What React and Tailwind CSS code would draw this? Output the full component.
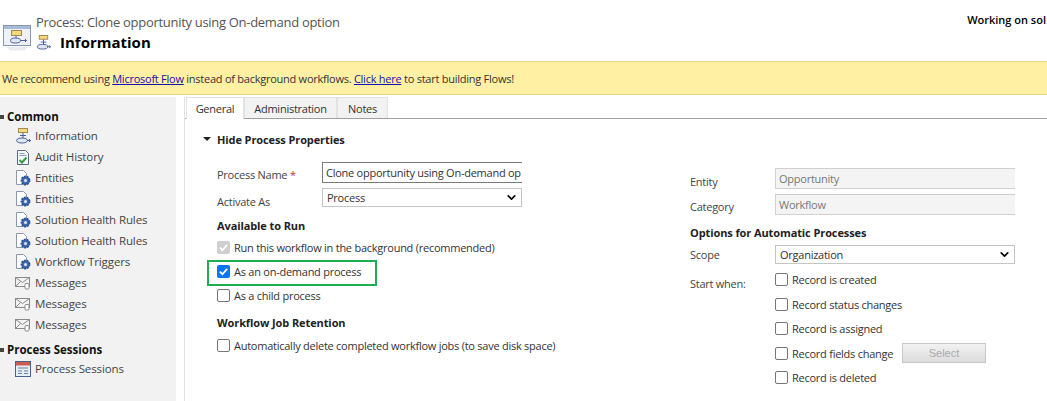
import { ChevronDown } from "lucide-react";

function FlowIcon({ className = "w-[16px] h-[16px]" }) {
  return (
    <svg viewBox="0 0 16 16" className={className}>
      <rect x="3.5" y="0.5" width="9" height="4" fill="#f8d77c" stroke="#a08a50" />
      <path d="M8 5v5M5 7.5h6" stroke="#4a5f96" />
      <ellipse cx="7" cy="12.5" rx="5.5" ry="2.5" fill="#dfe7f5" stroke="#4a5f96" />
      <path d="M12 12.5h3.5M14 11l1.5 1.5L14 14" fill="none" stroke="#4a5f96" />
    </svg>
  );
}

function AuditIcon() {
  return (
    <svg viewBox="0 0 16 16" className="w-[16px] h-[16px]">
      <path d="M2.5 1.5h8l3 3v11h-11z" fill="#f4f7fb" stroke="#5b6b85" />
      <path d="M4.5 4.5h5M4.5 6.5h7" stroke="#8fa0b8" />
      <path d="M4.5 11l2.5 2.5 4.5-5" fill="none" stroke="#2f9e3c" strokeWidth="2" />
    </svg>
  );
}

function GearDocIcon() {
  return (
    <svg viewBox="0 0 16 16" className="w-[16px] h-[16px]">
      <path d="M1.5 0.5h7l3 3v11h-10z" fill="#fff" stroke="#8b97ab" />
      <circle cx="10.5" cy="10.5" r="4" fill="#3f6cb5" stroke="#274b8c" strokeWidth="1.8" strokeDasharray="1.8 1" />
      <circle cx="10.5" cy="10.5" r="1.5" fill="#dfe8f5" />
    </svg>
  );
}

function MailIcon() {
  return (
    <svg viewBox="0 0 16 16" className="w-[16px] h-[16px]">
      <rect x="0.5" y="2.5" width="14" height="9" fill="#f3f3f3" stroke="#8a8a8a" />
      <path d="M0.5 2.5l7 5 7-5M0.5 11.5l5-5" fill="none" stroke="#8a8a8a" />
      <rect x="10" y="8.5" width="4" height="5.5" rx="1" fill="#fff" stroke="#8a8a8a" />
    </svg>
  );
}

function SessionIcon() {
  return (
    <svg viewBox="0 0 16 16" className="w-[16px] h-[16px]">
      <rect x="0.5" y="0.5" width="15" height="15" fill="#e8eef6" stroke="#46618c" />
      <rect x="1" y="1" width="14" height="3.5" fill="#c95f50" />
      <path d="M3 7h10M3 10h4M9 10h4M3 12.5h4M9 12.5h4" stroke="#6b7f9f" />
    </svg>
  );
}

function BigProcessIcon() {
  return (
    <svg viewBox="0 0 30 30" className="w-[30px] h-[30px]">
      <rect x="1.5" y="3.5" width="27" height="20" fill="#eef2f8" stroke="#8898b3" />
      <rect x="2" y="4" width="26" height="3" fill="#a9bad3" />
      <rect x="9.5" y="8.5" width="10" height="5" fill="#f8d77c" stroke="#9b8a55" />
      <path d="M14 14v3" stroke="#4a5f96" />
      <ellipse cx="13.5" cy="18.5" rx="5" ry="2.5" fill="#dfe7f5" stroke="#4a5f96" />
      <path d="M18.5 18.5h6M23 17l1.5 1.5L23 20" fill="none" stroke="#4a5f96" />
      <path d="M4 24.5h22l-3 4H8z" fill="#e9edf3" />
    </svg>
  );
}

function CheckBox({ checked, disabled }) {
  if (checked) {
    return (
      <span className={`w-[13px] h-[13px] rounded-[2px] flex items-center justify-center shrink-0 ${disabled ? "bg-[#cfcfcf]" : "bg-[#0a75f0]"}`}>
        <svg viewBox="0 0 12 12" className="w-[11px] h-[11px]">
          <path d="M2 6.2l2.8 2.8L10 3.2" fill="none" stroke="#fff" strokeWidth="2" />
        </svg>
      </span>
    );
  }
  return <span className="w-[13px] h-[13px] rounded-[2px] border border-[#767676] bg-white shrink-0" />;
}

function Check({ label, checked, disabled, className = "" }) {
  return (
    <div className={`flex items-center gap-[4px] text-[#333] ${className}`}>
      <CheckBox checked={checked} disabled={disabled} />
      <span className="whitespace-nowrap">{label}</span>
    </div>
  );
}

function NavItem({ icon, label }) {
  return (
    <div className="h-[21px] flex items-center pl-[15px] gap-[4px] text-[#444] text-[11.5px] tracking-[-0.1px]">
      {icon}
      <span className="whitespace-nowrap">{label}</span>
    </div>
  );
}

function Select({ value, className = "" }) {
  return (
    <div className={`border border-[#c4c4c4] flex items-center justify-between pl-[4px] pr-[3px] text-[#333] ${className}`}>
      <span>{value}</span>
      <ChevronDown className="w-[13px] h-[13px] text-black" strokeWidth={3} />
    </div>
  );
}

export default function App() {
  return (
    <div className="w-[1047px] h-[401px] overflow-hidden bg-white font-['Open_Sans',sans-serif] text-[11px] tracking-[-0.25px] leading-none">
      {/* Header */}
      <div className="h-[61px] flex pl-[2px] pt-[15px]">
        <div className="pt-[7px] pr-[4px]">
          <BigProcessIcon />
        </div>
        <div className="pt-[1px]">
          <div className="text-[13px] text-[#555] h-[16px] tracking-[-0.3px] whitespace-nowrap">Process: Clone opportunity using On-demand option</div>
          <div className="flex items-center gap-[9px] mt-[3px]">
            <FlowIcon className="w-[15px] h-[15px]" />
            <span className="text-[15px] font-bold text-black tracking-[0px]">Information</span>
          </div>
        </div>
        <div className="ml-auto -mt-[1px] pr-[1px] font-semibold text-black tracking-[0px] whitespace-nowrap">Working on sol</div>
      </div>

      {/* Banner */}
      <div className="h-[34px] bg-[#fff0a3] border-y border-[#e3d97e] flex items-center pl-[2px] text-[#333] whitespace-nowrap">
        We recommend using&nbsp;<span className="text-[#1a0dab] underline">Microsoft Flow</span>&nbsp;instead of background workflows.&nbsp;<span className="text-[#1a0dab] underline">Click here</span>&nbsp;to start building Flows!
      </div>

      <div className="flex h-[306px] pt-[2px]">
        {/* Sidebar */}
        <div className="w-[176px] bg-[#f2f2f2] pt-[12px] shrink-0">
          <div className="flex items-center gap-[3px] h-[16px] font-bold text-[11.5px] text-[#111] tracking-[0px]">
            <span className="w-[4px] h-[4px] bg-[#444]" />
            <span>Common</span>
          </div>
          <div>
            <NavItem icon={<FlowIcon />} label="Information" />
            <NavItem icon={<AuditIcon />} label="Audit History" />
            <NavItem icon={<GearDocIcon />} label="Entities" />
            <NavItem icon={<GearDocIcon />} label="Entities" />
            <NavItem icon={<GearDocIcon />} label="Solution Health Rules" />
            <NavItem icon={<GearDocIcon />} label="Solution Health Rules" />
            <NavItem icon={<GearDocIcon />} label="Workflow Triggers" />
            <NavItem icon={<MailIcon />} label="Messages" />
            <NavItem icon={<MailIcon />} label="Messages" />
            <NavItem icon={<MailIcon />} label="Messages" />
          </div>
          <div className="flex items-center gap-[3px] h-[16px] mt-[7px] font-bold text-[11.5px] text-[#111] tracking-[0px]">
            <span className="w-[4px] h-[4px] bg-[#444]" />
            <span>Process Sessions</span>
          </div>
          <NavItem icon={<SessionIcon />} label="Process Sessions" />
        </div>

        {/* Main */}
        <div className="flex-1 ml-[8px] border-l border-[#e2e2e2] min-w-0">
          <div className="flex h-[22px] pl-[1px] border-b border-[#a0a0a0] text-[#333]">
            <div className="w-[58px] h-[22px] bg-white border-x border-t border-[#e2e2e2] flex items-center justify-center">General</div>
            <div className="w-[93px] bg-[#f2f2f2] border-x border-t border-[#e2e2e2] flex items-center justify-center">Administration</div>
            <div className="w-[51px] bg-[#f2f2f2] border-x border-t border-[#e2e2e2] flex items-center justify-center">Notes</div>
          </div>

          <div className="flex pt-[13px]">
            {/* Left column */}
            <div className="w-[512px] pl-[18px] shrink-0">
              <div className="flex items-center h-[14px] font-bold text-[#222] tracking-[-0.1px]">
                <span className="w-0 h-0 border-x-[4px] border-x-transparent border-t-[4px] border-t-[#222] mr-[6px]" />
                Hide Process Properties
              </div>
              <div className="pl-[14px] mt-[16px]">
                <div className="flex items-center h-[21px]">
                  <div className="w-[105px] pt-[3px] text-[#444]">Process Name <span className="text-[#c0392b]">*</span></div>
                  <div className="w-[200px] h-[21px] border-y border-l border-[#7a7a7a] flex items-center pl-[3px] text-[#333] whitespace-nowrap overflow-hidden">Clone opportunity using On-demand op</div>
                </div>
                <div className="flex items-center h-[19px] mt-[5px]">
                  <div className="w-[105px] pt-[7px] text-[#444]">Activate As</div>
                  <Select value="Process" className="w-[200px] h-[19px]" />
                </div>
                <div className="font-bold text-[#222] mt-[13px] h-[14px] tracking-[-0.1px]">Available to Run</div>
                <Check label="Run this workflow in the background (recommended)" checked disabled className="h-[14px] mt-[6px]" />
                <div className="flex items-center h-[26px] w-[170px] mt-[6px] -ml-[10px] pl-[8px] pb-[3px] border-2 border-[#1fae4f]">
                  <Check label="As an on-demand process" checked />
                </div>
                <Check label="As a child process" className="h-[14px] mt-[2px]" />
                <div className="font-bold text-[#222] mt-[15px] h-[14px] tracking-[-0.1px]">Workflow Job Retention</div>
                <Check label="Automatically delete completed workflow jobs (to save disk space)" className="h-[14px] mt-[7px]" />
              </div>
            </div>

            {/* Right column */}
            <div className="flex-1 pt-[36px] pr-[32px] min-w-0 -ml-[7px]">
              <div className="flex items-center h-[21px]">
                <div className="w-[85px] pt-[5px] text-[#444]">Entity</div>
                <div className="flex-1 h-[21px] bg-[#f4f4f4] border-y border-l border-[#d0d0d0] flex items-center pl-[3px] text-[#777]">Opportunity</div>
              </div>
              <div className="flex items-center h-[21px] mt-[5px]">
                <div className="w-[85px] pt-[4px] text-[#444]">Category</div>
                <div className="flex-1 h-[21px] bg-[#f4f4f4] border-y border-l border-[#d0d0d0] flex items-center pl-[3px] text-[#777]">Workflow</div>
              </div>
              <div className="font-bold text-[#222] mt-[12px] h-[14px] tracking-[-0.1px]">Options for Automatic Processes</div>
              <div className="flex items-center h-[19px] mt-[4px]">
                <div className="w-[85px] text-[#444]">Scope</div>
                <Select value="Organization" className="flex-1 h-[19px]" />
              </div>
              <div className="flex mt-[8px]">
                <div className="w-[85px] pt-[6px] text-[#444]">Start when:</div>
                <div className="flex flex-col">
                  <Check label="Record is created" className="h-[14px]" />
                  <Check label="Record status changes" className="h-[14px] mt-[11px]" />
                  <Check label="Record is assigned" className="h-[14px] mt-[10px]" />
                  <div className="flex items-center h-[14px] mt-[11px]">
                    <Check label="Record fields change" className="w-[127px]" />
                    <div className="w-[84px] h-[20px] bg-gradient-to-b from-[#f2f2f2] to-[#dcdcdc] border border-[#c8c8c8] flex items-center justify-center text-[#aaa] font-['Liberation_Sans',sans-serif] tracking-normal">Select</div>
                  </div>
                  <Check label="Record is deleted" className="h-[14px] mt-[10px]" />
                </div>
              </div>
            </div>
          </div>
        </div>
      </div>
    </div>
  );
}
